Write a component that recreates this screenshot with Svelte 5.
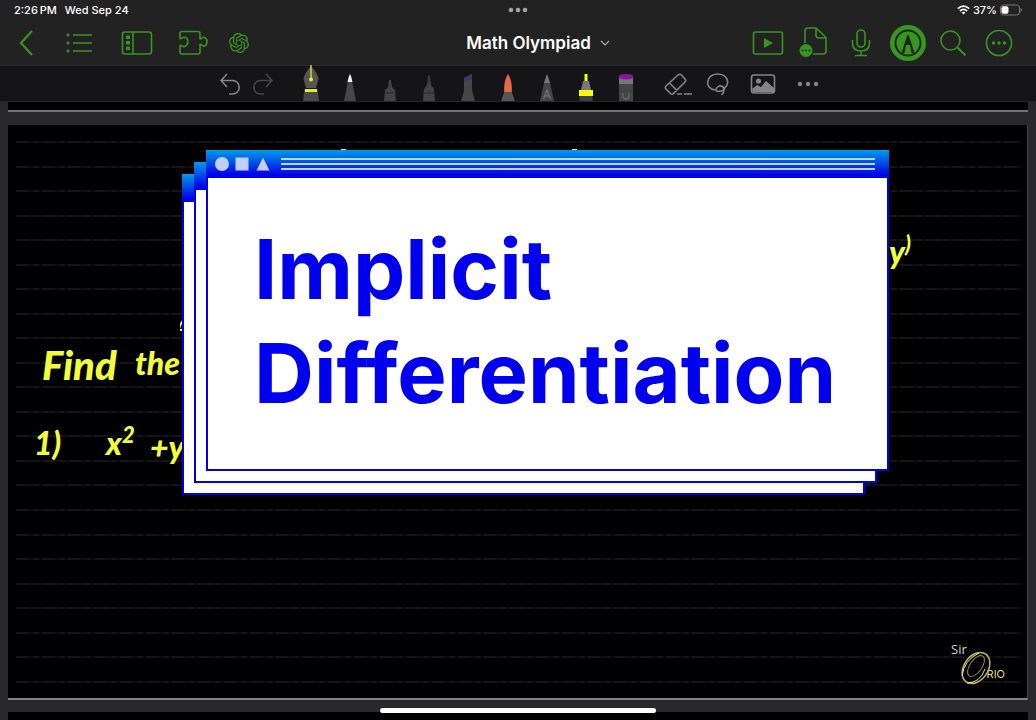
<script>
  const rules = Array.from({ length: 23 });
</script>

<div class="app">
  <header>
    <div class="status">
      <div class="when"><span>2:26&#8201;PM</span><span>Wed Sep 24</span></div>
      <svg class="grip" width="20" height="6" viewBox="0 0 20 6" fill="#a2a2a2"><circle cx="3" cy="3" r="2.3"/><circle cx="10" cy="3" r="2.3"/><circle cx="17" cy="3" r="2.3"/></svg>
      <div class="power">
        <svg width="13" height="10" viewBox="0 0 13 10" fill="none" stroke="#fff" stroke-width="1.7"><path d="M.8 3.7Q6.5-1.3 12.2 3.7M2.9 6Q6.5 2.9 10.1 6"/><path d="M4.6 7.6Q6.5 6 8.4 7.6L6.5 9.6Z" fill="#fff" stroke="none"/></svg>
        <span>37%</span>
        <svg width="22" height="12" viewBox="0 0 22 12"><rect x=".5" y="1" width="19" height="10" rx="3" fill="none" stroke="#777"/><rect x="1.500" y="2.300" width="7" height="7.400" rx="2" fill="#fff"/><path d="M20.500 4v4q1.500-.5 1.500-2t-1.500-2" fill="#777"/></svg>
      </div>
    </div>
    <nav>
      <div class="group">
        <button class="w52" aria-label="Back"><svg width="16" height="28" viewBox="0 0 16 28"><path d="M14 2 3 14l11 12" stroke-width="2.200"/></svg></button>
        <button class="w54" aria-label="Outline"><svg width="28" height="22" viewBox="0 0 28 22"><path d="M8 3h19M8 11h19M8 19h19" stroke-width="1.500"/><g class="solid"><circle cx="3" cy="3" r="1.500"/><circle cx="3" cy="11" r="1.500"/><circle cx="3" cy="19" r="1.500"/></g></svg></button>
        <button class="w62" aria-label="Sidebar"><svg width="32" height="26" viewBox="0 0 32 26"><rect x="1.500" y="2" width="29" height="22" rx="2.500"/><path d="M12 2v22"/><g class="solid"><rect x="5" y="5.500" width="4" height="3.500"/><rect x="5" y="11" width="4" height="3.500"/><rect x="5" y="16.500" width="4" height="3.500"/></g></svg></button>
        <button class="w50" aria-label="Extensions"><svg width="30" height="26" viewBox="0 0 30 26"><path d="M4 1.500h16q2 0 2 2v5.300h1.500q1-2.100 3-1.400 2.500.9 2.500 4.300t-2.500 4.300q-2 .6-3-1.500H22v7.500q0 2-2 2H4q-2 0-2-2v-6.500h1.500q1 1.300 2.500 1.100 3.800-.6 3.800-5T6 7.300q-1.500-.2-2.500 1.200H2v-5q0-2 2-2"/></svg></button>
        <button class="w42" aria-label="Assistant"><svg width="20" height="20" viewBox="0 0 24 24"><path class="solid" d="M22.2819 9.8211a5.9847 5.9847 0 0 0-.5157-4.9108 6.0462 6.0462 0 0 0-6.5098-2.9A6.0651 6.0651 0 0 0 4.9807 4.1818a5.9847 5.9847 0 0 0-3.9977 2.9 6.0462 6.0462 0 0 0 .7427 7.0966 5.98 5.98 0 0 0 .511 4.9107 6.051 6.051 0 0 0 6.5146 2.9001A5.9847 5.9847 0 0 0 13.2599 24a6.0557 6.0557 0 0 0 5.7718-4.2058 5.9894 5.9894 0 0 0 3.9977-2.9001 6.0557 6.0557 0 0 0-.7475-7.0729zm-9.022 12.6081a4.4755 4.4755 0 0 1-2.8764-1.0408l.1419-.0804 4.7783-2.7582a.7948.7948 0 0 0 .3927-.6813v-6.7369l2.02 1.1686a.071.071 0 0 1 .038.052v5.5826a4.504 4.504 0 0 1-4.4945 4.4944zm-9.6607-4.1254a4.4708 4.4708 0 0 1-.5346-3.0137l.142.0852 4.783 2.7582a.7712.7712 0 0 0 .7806 0l5.8428-3.3685v2.3324a.0804.0804 0 0 1-.0332.0615L9.74 19.9502a4.4992 4.4992 0 0 1-6.1408-1.6464zM2.3408 7.8956a4.485 4.485 0 0 1 2.3655-1.9728V11.6a.7664.7664 0 0 0 .3879.6765l5.8144 3.3543-2.0201 1.1685a.0757.0757 0 0 1-.071 0l-4.8303-2.7865A4.504 4.504 0 0 1 2.3408 7.872zm16.5963 3.8558L13.1038 8.364 15.1192 7.2a.0757.0757 0 0 1 .071 0l4.8303 2.7913a4.4944 4.4944 0 0 1-.6765 8.1042v-5.6772a.79.79 0 0 0-.407-.667zm2.0107-3.0231l-.142-.0852-4.7735-2.7818a.7759.7759 0 0 0-.7854 0L9.409 9.2297V6.8974a.0662.0662 0 0 1 .0284-.0615l4.8303-2.7866a4.4992 4.4992 0 0 1 6.6802 4.66zM8.3065 12.863l-2.02-1.1638a.0804.0804 0 0 1-.038-.0567V6.0742a4.4992 4.4992 0 0 1 7.3757-3.4537l-.142.0805L8.704 5.459a.7948.7948 0 0 0-.3927.6813zm1.0976-2.3654l2.602-1.4998 2.6069 1.4998v2.9994l-2.5974 1.4997-2.6067-1.4997Z"/></svg></button>
      </div>
      <button class="title">Math Olympiad <svg width="10" height="6" viewBox="0 0 10 6"><path d="m1 1 4 4 4-4" stroke="#aaa" stroke-width="1.200"/></svg></button>
      <div class="group right">
        <button class="w44" aria-label="Present"><svg width="32" height="26" viewBox="0 0 32 26"><rect x="1.500" y="2" width="29" height="22" rx="2"/><path class="solid" d="M12 8v10l9-5z"/></svg></button>
        <button class="w48" aria-label="Page options"><svg width="30" height="32" viewBox="0 0 30 32"><path d="M6 16V4q0-3 3-3h8l10 9.500V24q0 3-3 3H14M17 1v7q0 3 3 3h7"/><circle class="solid" cx="7" cy="23.500" r="6.500"/><g fill="#222"><circle cx="3.500" cy="23.500" r="1"/><circle cx="7" cy="23.500" r="1"/><circle cx="10.500" cy="23.500" r="1"/></g></svg></button>
        <button class="w46" aria-label="Record"><svg width="22" height="30" viewBox="0 0 22 30"><rect x="7" y="2" width="8" height="17" rx="4"/><path d="M2.500 12v3q0 8 8.500 8t8.500-8v-3M11 23v4M5 27.500h12"/></svg></button>
        <button class="w48" aria-label="Draw"><svg width="38" height="38" viewBox="0 0 38 38"><circle class="solid" cx="19" cy="19" r="18"/><circle class="ring" cx="19" cy="19" r="12.500"/><path d="m12.500 29 5.800-18h1.400l5.800 18h-3l-1.500-8h-4l-1.500 8z" fill="#1b291b"/></svg></button>
        <button class="w42" aria-label="Search"><svg width="28" height="28" viewBox="0 0 28 28"><circle cx="11.500" cy="11.500" r="9.500"/><path d="m18.500 18.500 8 8" stroke-width="2"/></svg></button>
        <button class="w50" aria-label="More"><svg width="28" height="28" viewBox="0 0 28 28"><circle cx="14" cy="14" r="12.500"/><g class="solid"><circle cx="8.500" cy="14" r="1.700"/><circle cx="14" cy="14" r="1.700"/><circle cx="19.500" cy="14" r="1.700"/></g></svg></button>
      </div>
    </nav>
  </header>

  <div class="tools" role="toolbar" aria-label="Drawing tools">
    <button class="w34" aria-label="Undo"><svg width="22" height="24" viewBox="0 0 22 24"><path d="M8 2 2 8.500 8 15M2 8.500h11.500a6.700 6.700 0 0 1 0 13.500H10"/></svg></button>
    <button class="w32 dim" aria-label="Redo"><svg width="22" height="24" viewBox="0 0 22 24"><path d="m14 2 6 6.500-6 6.500M20 8.500H8.500a6.700 6.700 0 0 0 0 13.500H12"/></svg></button>
    <div class="pens">
      <button aria-label="Fountain pen"><svg width="20" height="38" viewBox="0 0 20 38"><path d="M10 3Q3.500 10 2.500 16l2.500 9h10l2.500-9Q16.500 10 10 3" fill="#555557"/><path d="M3.500 26h13L18 38H2z" fill="#49494b"/><path d="M4 26h12v3H4z" fill="#e6ef22"/><path d="M10 2v14" stroke="#e6ef22" stroke-width="1.300"/><circle cx="10" cy="16.500" r="2" fill="#e6ef22"/></svg></button>
      <button aria-label="Ballpoint pen"><svg width="20" height="38" viewBox="0 0 20 38"><path d="m8 18-4 20h12l-4-20z" fill="#474749"/><path d="M10 11q-1 1-2.500 8h5Q11 12 10 11" fill="#f2f2f2"/></svg></button>
      <button aria-label="Fine pen"><svg width="20" height="38" viewBox="0 0 20 38"><path d="M9 17h2l1 7 3 3 1 11H4l1-11 3-3z" fill="#434345"/><path d="M4 30h12" stroke="#29292b"/></svg></button>
      <button aria-label="Technical pen"><svg width="20" height="38" viewBox="0 0 20 38"><path d="M9 13h2l1 9 3 4 1 12H4l1-12 3-4z" fill="#434345"/><path d="M10 12v8" stroke="#343054" stroke-width="1.500"/><path d="M4 30h12" stroke="#29292b"/></svg></button>
      <button aria-label="Calligraphy pen"><svg width="20" height="38" viewBox="0 0 20 38"><path d="m6 15 8-4v16l3 11H3l3-10z" fill="#464648"/><path d="m6 15 8-4v6l-8 1z" fill="#44356e"/></svg></button>
      <button aria-label="Brush"><svg width="20" height="38" viewBox="0 0 20 38"><path d="m7 27-4 11h14l-4-11z" fill="#555"/><path d="M10 11Q5.500 18 6.300 29h7.400Q14.500 18 10 11" fill="#e76845"/></svg></button>
      <button aria-label="Pencil"><svg width="20" height="38" viewBox="0 0 20 38"><path d="m10 11-3 9-4 18h14l-4-18z" fill="#454547"/><path d="m10 11-3 9h6z" fill="#777"/><path d="m6.500 36 3.500-9 3.500 9M8 33h4" stroke="#737375" stroke-width="1.300"/></svg></button>
      <button aria-label="Highlighter"><svg width="20" height="38" viewBox="0 0 20 38"><path d="M8.500 11h3v8h-3z" fill="#f4ff00"/><path d="M7 18h6l2 9H5z" fill="#77777a"/><path d="M3 27h14v6H3z" fill="#f4ff00"/><path d="M3.500 33h13v5h-13z" fill="#404042"/></svg></button>
      <button aria-label="Tape"><svg width="20" height="38" viewBox="0 0 20 38"><path d="M3 14h14v24H3z" fill="#454547"/><path d="M3 13h14v8H3z" fill="#77777a"/><path d="M3 15v-2q0-2 7-2t7 2v2q-7 3-14 0" fill="#8d13a5"/><path d="M7 30q-1 6 3 6t3-6" stroke="#68686a" stroke-width="1.300"/></svg></button>
    </div>
    <button class="w40" aria-label="Eraser"><svg width="30" height="24" viewBox="0 0 30 24"><path d="m2 14 12-11q2-1.500 3.500 0l3.500 4q1.500 1.500 0 3L9.500 21.500q-1.500 1.500-3 0L2 17q-1.500-1.500 0-3M5.500 11l7.500 7.500M13 22h5M20 22h8"/></svg></button>
    <button class="w38" aria-label="Lasso"><svg width="24" height="24" viewBox="0 0 24 24"><path d="M17 17c8-5 5-15-6-15S-2 17 9 18M10 17q3-5 7-2t-2 4-5-2M17 17q2 3-1.500 6"/></svg></button>
    <button class="w52" aria-label="Image"><svg width="26" height="22" viewBox="0 0 26 22"><rect x="1.500" y="2" width="23" height="18" rx="2.500"/><circle cx="8.500" cy="8" r="1.800" fill="#858587"/><path d="m2 16 5-4 4 2 5-6 8 7v4H3z" fill="#858587" stroke="none"/></svg></button>
    <button class="w38" aria-label="More tools"><svg width="22" height="6" viewBox="0 0 22 6" fill="#858587"><g stroke="none"><circle cx="3" cy="3" r="2.200"/><circle cx="11" cy="3" r="2.200"/><circle cx="19" cy="3" r="2.200"/></g></svg></button>
  </div>

  <main>
    <div class="sheet previous"></div>
    <section class="sheet page">
      <div class="rules">{#each rules as _}<i></i>{/each}</div>
      <svg class="marks" width="400" height="210" viewBox="0 0 400 210" fill="none" stroke="#f1ff38" stroke-width="2"><path d="M5 180q-4 4 1 6M4 194q-5 7-5 11h6"/><path d="M161 25h5M392 25h5"/></svg>
      <span class="ink find">Find</span>
      <span class="ink the">the</span>
      <span class="ink number">1)</span>
      <span class="ink formula">x<sup>2</sup></span>
      <span class="ink plus">+y</span>
      <span class="ink power-y">y<sup>)</sup></span>

      <div class="stack">
        <div class="window"><div class="bar"></div></div>
        <div class="window"><div class="bar"></div></div>
        <article class="window">
          <div class="bar">
            <svg width="56" height="14" viewBox="0 0 56 14" fill="#c3ceff"><circle cx="7" cy="7" r="7"/><path d="M20.500.5h13v13h-13zM48 .5 54.500 13.500h-13z"/></svg>
            <div class="lines"></div>
          </div>
          <h1>Implicit<br>Differentiation</h1>
        </article>
      </div>

      <div class="sign">
        <span class="sir">Sir</span><span class="rio">RIO</span>
        <svg width="34" height="36" viewBox="0 0 34 36" fill="none"><ellipse cx="17" cy="18" rx="12" ry="17" transform="rotate(35 17 18)" stroke="#bdb765" stroke-width="1.500"/><ellipse cx="17" cy="16" rx="6" ry="12" transform="rotate(35 17 16)" stroke="#8c8272"/><path d="M3 26Q5 10 20 3M8 33q13 0 18-14" stroke="#f2ed75"/></svg>
      </div>
    </section>
    <div class="sheet next"></div>
    <div class="home"></div>
  </main>
</div>

<style>
  :global(body) { margin: 0; background: #000; }
  .app { min-height: 100vh; display: flex; flex-direction: column; font-family: Inter, "Liberation Sans", sans-serif; color: #fff; }
  button { border: 0; padding: 0; background: none; color: inherit; font: inherit; display: flex; align-items: center; justify-content: center; }
  svg { display: block; flex: none; }
  header { background: #222; height: 66px; box-sizing: border-box; border-bottom: 1px solid #29292a; }
  .status { height: 20px; display: grid; grid-template-columns: 1fr auto 1fr; align-items: center; padding: 0 14px; font-size: 11px; font-weight: 500; }
  .when { display: flex; gap: 8px; }
  .power { display: flex; justify-content: flex-end; align-items: center; gap: 3px; }
  nav { height: 46px; display: grid; grid-template-columns: 1fr auto 1fr; align-items: center; }
  .group { display: flex; align-items: center; }
  .group button { height: 46px; }
  .group svg { fill: none; stroke: #38951f; stroke-width: 1.6; }
  .group .solid { fill: #38951f; stroke: none; }
  .group .ring { stroke: #1b291b; stroke-width: 2; }
  .group [fill="#222"], .group [fill="#1b291b"] { stroke: none; }
  .right { justify-content: flex-end; padding-right: 12px; }
  .title { font-size: 17px; font-weight: 600; gap: 9px; padding-left: 40px; }
  .title svg { fill: none; }
  .w32 { width: 32px; } .w34 { width: 34px; } .w38 { width: 38px; } .w40 { width: 40px; }
  .w42 { width: 42px; } .w44 { width: 44px; } .w46 { width: 46px; } .w48 { width: 48px; }
  .w50 { width: 50px; } .w52 { width: 52px; } .w54 { width: 54px; } .w62 { width: 62px; }
  .tools { height: 36px; display: flex; justify-content: center; background: #151517; border-bottom: 1px solid #252528; box-sizing: border-box; padding-left: 3px; }
  .tools > button > svg { stroke: #858587; stroke-width: 1.6; }
  .tools > button > svg:not([fill]) { fill: none; }
  .dim { opacity: .45; }
  .pens { display: grid; grid-template-columns: repeat(9, 1fr); width: 354px; margin: 0 13px; }
  .pens button { align-items: flex-end; height: 35px; }
  .pens svg { fill: none; }
  main { flex: 1; display: flex; flex-direction: column; background: #29282b; padding: 0 8px; position: relative; overflow: hidden; }
  .sheet { background: #000002; }
  .previous { height: 8px; border-bottom: 2px solid #737375; margin-bottom: 13px; }
  .page { flex: 1; min-height: 500px; position: relative; border-bottom: 2px solid #858587; border-right: 1px solid #454547; display: flex; }
  .next { height: 8px; margin-top: 12px; }
  .rules { flex: 1; display: flex; flex-direction: column; justify-content: space-between; padding: 16px 6px 15px 8px; }
  .rules i { height: 2px; background: repeating-linear-gradient(90deg, #151517 0 13px, #0d0d0f 13px 17px, #151517 17px 23px, #09090b 23px 26px); }
  .marks { position: absolute; left: 172px; top: 0; }
  .ink { position: absolute; color: #f1ff38; font-family: Lato, sans-serif; font-style: italic; font-weight: 900; font-size: 32px; line-height: 40px; white-space: nowrap; }
  .ink sup { font-size: 22px; line-height: 0; vertical-align: 12px; }
  .find { left: 34px; top: 220px; font-size: 40px; }
  .the { left: 127px; top: 218px; }
  .number { left: 26px; top: 298px; }
  .formula { left: 98px; top: 298px; }
  .plus { left: 142px; top: 302px; }
  .power-y { left: 881px; top: 107px; }
  .stack { position: absolute; left: 174px; right: 138px; top: 25px; display: grid; }
  .window { grid-area: 1 / 1; border: 2px solid #0000e6; border-top: 0; background: #fff; }
  .window:nth-child(1) { margin: 24px 24px 0 0; }
  .window:nth-child(2) { margin: 12px; }
  .window:nth-child(3) { margin: 0 0 24px 24px; }
  .bar { height: 28px; margin: 0 -2px; box-sizing: border-box; padding: 0 14px 0 9px; display: flex; align-items: center; gap: 10px; background: linear-gradient(#009ce9, #0000e8 90%); }
  .lines { flex: 1; height: 8px; border-top: 2px solid #b4ddff; border-bottom: 2px solid #c4d1ff; background: linear-gradient(transparent 3px, #bcd5ff 3px 5px, transparent 5px); }
  h1 { margin: 0; padding: 39px 40px 44px 46px; font-size: 83px; line-height: 104px; font-weight: 700; color: #0000ee; }
  .sign { position: absolute; right: 22px; bottom: 12px; width: 54px; height: 44px; }
  .sign span { position: absolute; line-height: 14px; }
  .sir { left: 0; top: 0; font-family: "Open Sans", sans-serif; font-size: 13px; color: #d0d0d0; }
  .rio { right: 0; bottom: 5px; font-size: 11px; color: #e0dc75; }
  .sign svg { position: absolute; left: 8px; bottom: 0; }
  .home { position: absolute; bottom: 7px; left: 50%; width: 276px; height: 5px; border-radius: 3px; background: #fff; transform: translateX(-50%); }
</style>
